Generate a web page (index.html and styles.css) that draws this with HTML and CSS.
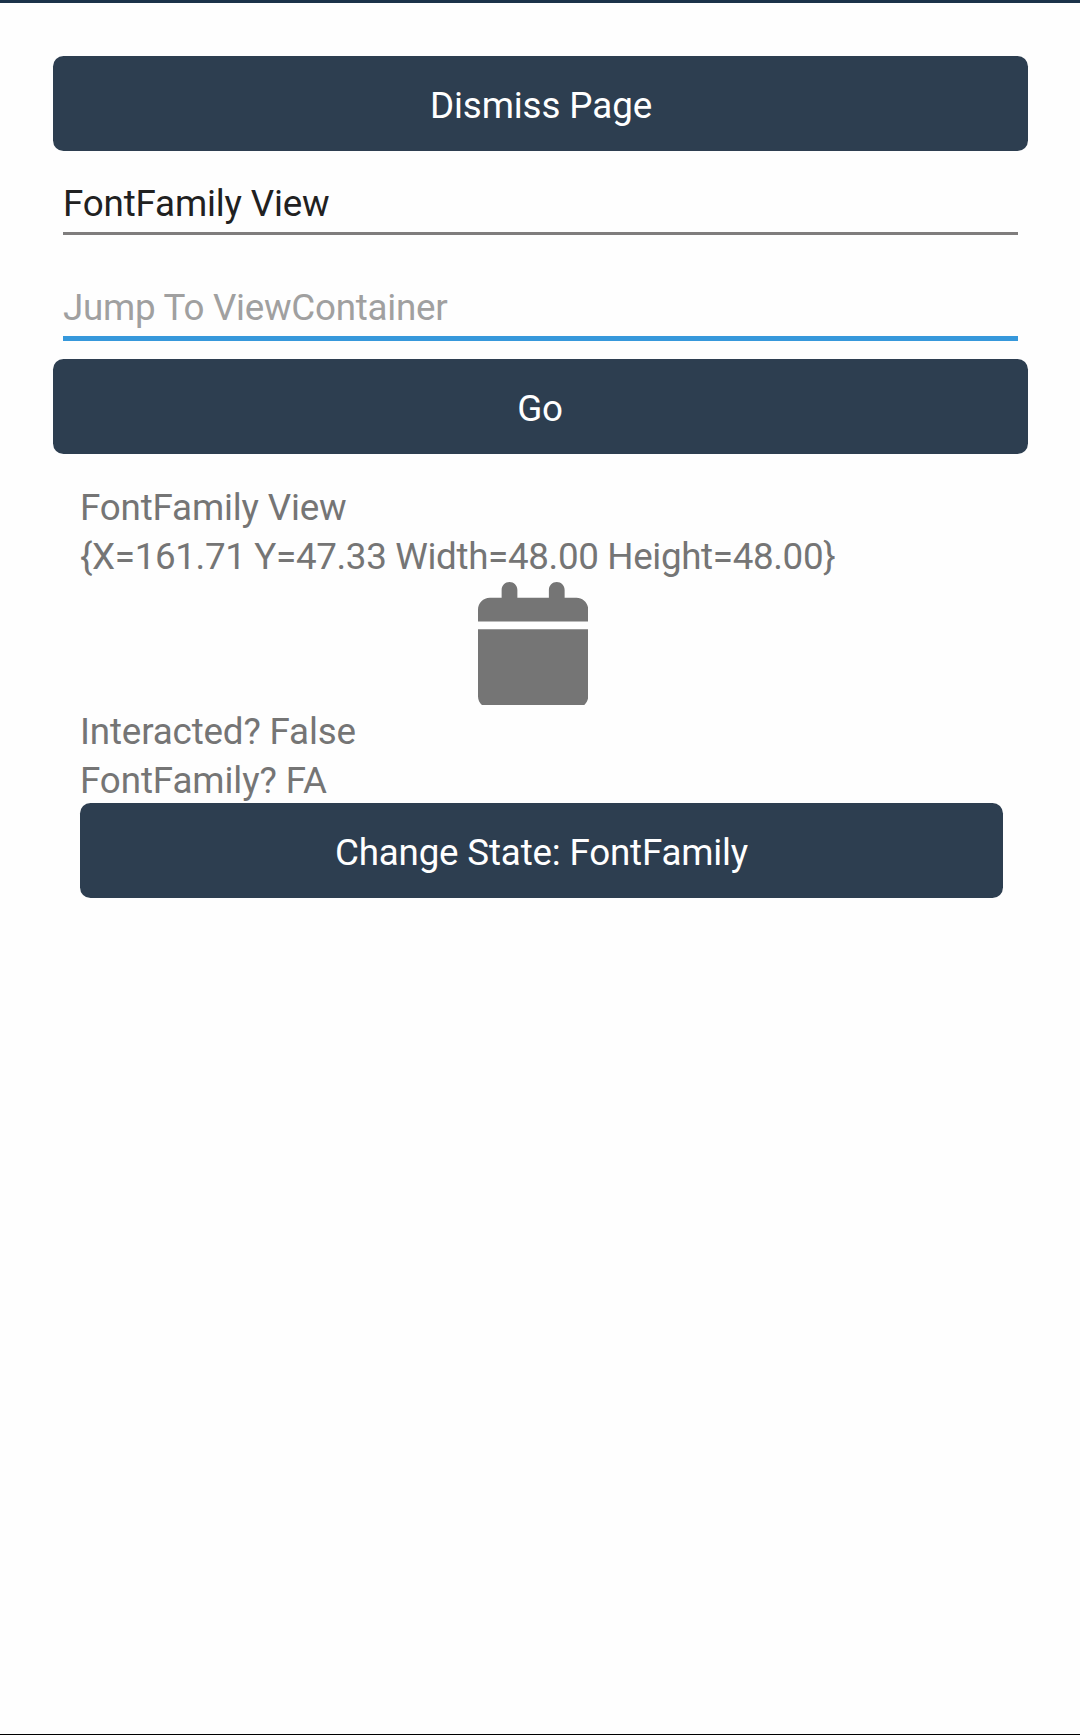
FILE: index.html
```html
<!DOCTYPE html>
<html lang="en">
<head>
<meta charset="utf-8">
<title>FontFamily View</title>
<link rel="stylesheet" href="styles.css">
</head>
<body>
<main class="page">
  <button class="button button-dismiss" type="button">Dismiss Page</button>
  <input class="field" type="text" value="FontFamily View" aria-label="View">
  <input class="field field-active" type="text" placeholder="Jump To ViewContainer" aria-label="Jump to">
  <button class="button button-go" type="button">Go</button>
  <section class="details">
    <p class="label">FontFamily View</p>
    <p class="label label-bounds">{X=161.71 Y=47.33 Width=48.00 Height=48.00}</p>
    <div class="icon-box">
      <svg class="icon" viewBox="0 0 448 512" aria-hidden="true"><path d="M96 32V64H48C21.500 64 0 85.500 0 112v48H448V112c0-26.500-21.500-48-48-48H352V32c0-17.700-14.300-32-32-32s-32 14.300-32 32V64H160V32c0-17.700-14.300-32-32-32S96 14.300 96 32zM448 192H0V464c0 26.500 21.500 48 48 48H400c26.500 0 48-21.500 48-48V192z"/></svg>
    </div>
    <p class="label">Interacted? False</p>
    <p class="label label-family">FontFamily? FA</p>
    <button class="button button-state" type="button">Change State: FontFamily</button>
  </section>
</main>
</body>
</html>
```
FILE: styles.css
```css
* {
  box-sizing: border-box;
}

body {
  margin: 0;
  background: #fefefe;
  font-family: Roboto, sans-serif;
  font-size: 36.75px;
  letter-spacing: -0.16px;
  color: #757575;
}

.page {
  display: flex;
  flex-direction: column;
  height: 1735px;
  padding: 53px 52px 0 53px;
  border-top: 3px solid #1c334a;
  border-bottom: 1px solid #000;
}

.button {
  flex: none;
  height: 95px;
  margin: 0;
  padding: 5px 0 0;
  border: 0;
  border-radius: 10.5px;
  background: #2d3e50;
  color: #fff;
  font: inherit;
  letter-spacing: -0.18px;
  line-height: 44px;
}

.button-dismiss {
  padding-left: 1px;
  letter-spacing: -0.1px;
}

.button-go {
  padding-right: 1px;
}

.field {
  flex: none;
  height: 54px;
  margin: 30px 10px 0;
  padding: 0 0 7px;
  border: 0;
  border-bottom: 3px solid #7f7d7d;
  border-radius: 0;
  outline: 0;
  background: transparent;
  color: #212121;
  font: inherit;
  letter-spacing: inherit;
  line-height: 44px;
}

.field-active {
  height: 56px;
  margin: 50px 10px 18px;
  border-bottom: 5px solid #3698db;
  letter-spacing: -0.26px;
}

.field::placeholder {
  color: #a0a0a0;
  opacity: 1;
}

.details {
  display: flex;
  flex-direction: column;
  padding: 29px 25px 0 27px;
}

.label {
  margin: 0;
  line-height: 49px;
  white-space: nowrap;
}

.label-bounds {
  letter-spacing: -0.34px;
}

.label-family {
  letter-spacing: -0.09px;
}

.icon-box {
  width: 110px;
  height: 124px;
  margin: 0 0 2px 398px;
  padding-top: 0.7px;
  overflow: hidden;
}

.icon {
  display: block;
  width: 110.25px;
  height: 126px;
  fill: #757575;
}

.button-state {
  margin-top: -2px;
}
```
